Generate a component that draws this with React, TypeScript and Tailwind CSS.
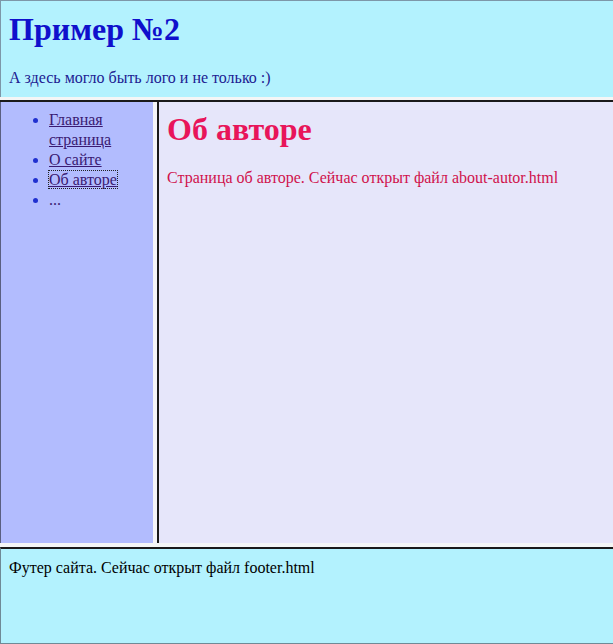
export default function App() {
  return (
    <div className="flex h-[644px] w-[613px] flex-col bg-white font-['Liberation_Serif','Times_New_Roman',serif] text-[16px] leading-[18px]">
      {/* top frame */}
      <div className="h-[97px] border-l border-t border-[#7d97a8] bg-[#b3f2fe] pl-[8px] pt-[10px]">
        <h1 className="mb-[21px] text-[32px] font-bold leading-[37px] text-[#1010cc]">
          Пример №2
        </h1>
        <p className="text-[#202092]">А здесь могло быть лого и не только :)</p>
      </div>
      <div className="h-[3px] bg-[#f4f6f6]" />

      {/* middle frames */}
      <div className="flex h-[443px] border-t-2 border-[#1a1a1a]">
        <div className="w-[153px] border-l border-[#5a5f80] bg-[#b2bcfe] pt-[8px]">
          <ul className="list-disc pl-[48px] leading-[20px] text-[#2030d0]">
            <li>
              <a href="#" className="text-[#3a1a72] underline">
                Главная страница
              </a>
            </li>
            <li>
              <a href="#" className="text-[#3a1a72] underline">
                О сайте
              </a>
            </li>
            <li>
              <a href="#" className="text-[#3a1a72] underline outline-1 outline-dotted outline-[#222]">
                Об авторе
              </a>
            </li>
            <li>
              <span className="text-[#3a1a72]">...</span>
            </li>
          </ul>
        </div>
        <div className="w-[4px] bg-[#f6f6f8]" />
        <div className="flex-1 border-l-2 border-[#1a1a1a] bg-[#e6e6fa] pl-[8px] pt-[9px]">
          <h1 className="mb-[21px] text-[32px] font-bold leading-[37px] text-[#e8155a]">
            Об авторе
          </h1>
          <p className="text-[#d0124c]">
            Страница об авторе. Сейчас открыт файл about-autor.html
          </p>
        </div>
      </div>
      <div className="h-[4px] bg-[#f4f6f6]" />

      {/* bottom frame */}
      <div className="flex-1 border-b border-l border-t-2 border-[#6f8a96] border-t-[#1a1a1a] bg-[#b3f2fe] pl-[8px] pt-[10px]">
        <p className="text-black">Футер сайта. Сейчас открыт файл footer.html</p>
      </div>
    </div>
  );
}
